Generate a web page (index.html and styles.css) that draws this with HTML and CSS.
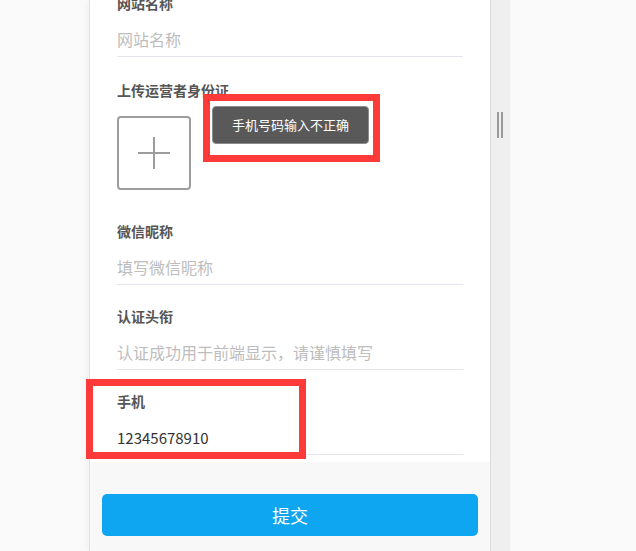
FILE: index.html
```html
<!DOCTYPE html>
<html lang="zh-CN">
  <head>
    <meta charset="utf-8" />
    <meta name="viewport" content="width=device-width" />
    <title>认证信息</title>
    <link rel="stylesheet" href="styles.css">
  </head>
  <body>
    <div class="stage">
      <div class="phone">
        <form class="form">
          <div class="field">
            <label class="field-label">网站名称</label>
            <input class="field-input" type="text" placeholder="网站名称" />
          </div>
          <div class="field field-upload">
            <label class="field-label">上传运营者身份证</label>
            <div class="upload-box"><span class="plus"></span></div>
          </div>
          <div class="field">
            <label class="field-label">微信昵称</label>
            <input class="field-input" type="text" placeholder="填写微信昵称" />
          </div>
          <div class="field">
            <label class="field-label">认证头衔</label>
            <input class="field-input" type="text" placeholder="认证成功用于前端显示，请谨慎填写" />
          </div>
          <div class="field field-last">
            <label class="field-label">手机</label>
            <input class="field-input field-phone" type="text" value="12345678910" />
          </div>
        </form>
        <div class="footer">
          <button class="submit" type="button">提交</button>
        </div>
        <div class="toast">手机号码输入不正确</div>
      </div>
      <div class="gutter"><span class="handle"></span></div>
    </div>

    <div class="mark mark-toast"></div>
    <div class="mark mark-phone"></div>
  </body>
</html>
```

FILE: styles.css
```css
html {
  font-family: "Noto Sans CJK SC", "Noto Sans", sans-serif;
}

body {
  margin: 0;
  background: #fafafa;
  height: 551px;
  overflow: hidden;
}

.stage {
  display: flex;
  height: 551px;
  padding-left: 89px;
}

.phone {
  position: relative;
  width: 400px;
  flex-shrink: 0;
  border-left: 1px solid #e2e2e2;
  border-right: 1px solid #dcdcdc;
  background: #f8f8f8;
  box-shadow: -3px 0 6px rgba(0, 0, 0, 0.035);
  overflow: hidden;
}

.gutter {
  width: 19px;
  background: #efefef;
  position: relative;
}

.handle {
  position: absolute;
  left: 6px;
  top: 112px;
  width: 2px;
  height: 26px;
  background: #9a9a9a;
  box-shadow: 4px 0 0 #9a9a9a;
}

/* page is scrolled a little: first label sits under the top edge */
.form {
  background: #fff;
  margin-top: -28px;
  padding: 0 27px 7px;
}

.field {
  padding-top: 21px;
}

.field-label {
  display: block;
  font-size: 14px;
  line-height: 20px;
  font-weight: bold;
  color: #555;
}

.field-input {
  display: block;
  width: 100%;
  box-sizing: border-box;
  margin-top: 9px;
  height: 35px;
  padding: 0;
  border: none;
  border-bottom: 1px solid #e4e4ee;
  outline: none;
  font-family: inherit;
  font-size: 16px;
  line-height: 34px;
  color: #333;
  background: transparent;
}

.field-input::placeholder {
  color: #bdbdbd;
}

.field-phone {
  font-size: 15px;
}

.field-upload {
  padding-top: 23px;
  padding-bottom: 10px;
}

.upload-box {
  position: relative;
  margin-top: 16px;
  width: 74px;
  height: 74px;
  box-sizing: border-box;
  border: 2px solid #9d9d9d;
  border-radius: 4px;
}

.plus::before,
.plus::after {
  content: "";
  position: absolute;
  background: #9d9d9d;
  left: 50%;
  top: 50%;
}

.plus::before {
  width: 32px;
  height: 2px;
  margin: -1px 0 0 -16px;
}

.plus::after {
  width: 2px;
  height: 32px;
  margin: -16px 0 0 -1px;
}

.footer {
  padding: 32px 12px;
}

.submit {
  display: block;
  width: 100%;
  height: 42px;
  border: none;
  border-radius: 5px;
  background: #0ea6f0;
  color: #fff;
  font-family: inherit;
  font-size: 18px;
}

.toast {
  position: absolute;
  left: 122px;
  top: 106px;
  width: 157px;
  height: 38px;
  box-sizing: border-box;
  border: 1px solid #8c8c8c;
  border-radius: 4px;
  background: #595959;
  color: #fff;
  font-size: 13px;
  line-height: 36px;
  text-align: center;
}

.mark {
  position: absolute;
  box-sizing: border-box;
  border: 7px solid #fd3a3a;
}

.mark-toast {
  left: 203px;
  top: 94px;
  width: 177px;
  height: 68px;
}

.mark-phone {
  left: 86px;
  top: 379px;
  width: 220px;
  height: 80px;
}
```
